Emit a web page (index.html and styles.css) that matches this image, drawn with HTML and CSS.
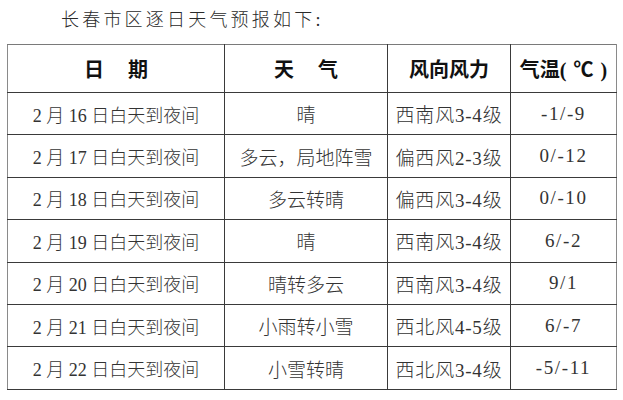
FILE: index.html
```html
<!DOCTYPE html>
<html lang="zh">
<head>
<meta charset="utf-8">
<link rel="stylesheet" href="styles.css">
</head>
<body>
<div class="page">
  <p class="title">长春市区逐日天气预报如下:</p>
  <table class="forecast">
    <colgroup>
      <col class="c-date"><col class="c-weather"><col class="c-wind"><col class="c-temp">
    </colgroup>
    <thead>
      <tr>
        <th><span class="gap">日</span>期</th>
        <th><span class="gap">天</span>气</th>
        <th>风向风力</th>
        <th>气温(<span class="deg">℃</span>)</th>
      </tr>
    </thead>
    <tbody>
      <tr><td>2 月 16 日白天到夜间</td><td class="wx">晴</td><td class="wind">西南风3-4级</td><td class="temp">-1/-9</td></tr>
      <tr><td>2 月 17 日白天到夜间</td><td class="wx">多云，局地阵雪</td><td class="wind">偏西风2-3级</td><td class="temp">0/-12</td></tr>
      <tr><td>2 月 18 日白天到夜间</td><td class="wx">多云转晴</td><td class="wind">偏西风3-4级</td><td class="temp">0/-10</td></tr>
      <tr><td>2 月 19 日白天到夜间</td><td class="wx">晴</td><td class="wind">西南风3-4级</td><td class="temp">6/-2</td></tr>
      <tr><td>2 月 20 日白天到夜间</td><td class="wx">晴转多云</td><td class="wind">西南风3-4级</td><td class="temp">9/1</td></tr>
      <tr><td>2 月 21 日白天到夜间</td><td class="wx">小雨转小雪</td><td class="wind">西北风4-5级</td><td class="temp">6/-7</td></tr>
      <tr><td>2 月 22 日白天到夜间</td><td class="wx">小雪转晴</td><td class="wind">西北风3-4级</td><td class="temp">-5/-11</td></tr>
    </tbody>
  </table>
</div>
</body>
</html>
```
FILE: styles.css
```css
html, body {
  margin: 0;
  padding: 0;
  background: #ffffff;
}
.page {
  width: 623px;
  height: 400px;
  overflow: hidden;
  font-family: "Liberation Serif", "Noto Sans CJK SC", serif;
  color: #333333;
}
.title {
  margin: 0;
  height: 42px;
  line-height: 40px;
  padding-left: 61px;
  font-size: 18px;
  letter-spacing: 3.2px;
  font-weight: 300;
  color: #2a2a2a;
}
.forecast {
  margin-left: 7px;
  margin-top: 2px;
  border-collapse: collapse;
  table-layout: fixed;
  width: 609px;
}
.c-date { width: 217px; }
.c-weather { width: 163px; }
.c-wind { width: 123px; }
.c-temp { width: 106px; }
.forecast th, .forecast td {
  border: 1px solid #3a3a3a;
  text-align: center;
  padding: 0;
  white-space: nowrap;
}
.forecast th {
  height: 47px;
  font-size: 20px;
  font-weight: 700;
  color: #111111;
}
.forecast td {
  height: 41.4px;
  font-size: 18px;
  font-weight: 300;
  color: #333333;
}
.forecast td.wx {
  font-size: 19px;
}
.forecast td.wind {
  font-size: 19px;
  letter-spacing: 0.8px;
}
.forecast td.temp {
  font-size: 19px;
  letter-spacing: 1.6px;
}
.forecast thead tr th:first-child,
.forecast tbody tr td:first-child {
  border-left: 1.5px solid #8a8a8a;
}
.forecast thead th {
  border-top: 1.5px solid #7a7a7a;
}
.forecast tr th:last-child,
.forecast tr td:last-child {
  border-right: 1.5px solid #8a8a8a;
}
.gap { margin-right: 24px; }
.deg { margin: 0 7px; }
```
